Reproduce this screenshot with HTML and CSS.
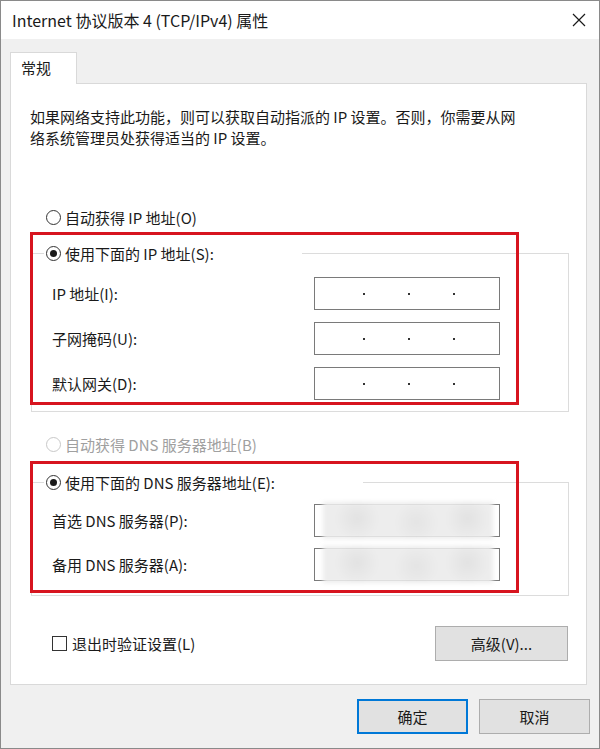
FILE: index.html
```html
<!DOCTYPE html>
<html lang="zh-CN">

<head>
    <meta charset="UTF-8">
    <title>Internet 协议版本 4 (TCP/IPv4) 属性</title>
    <link rel="stylesheet" href="styles.css">
</head>

<body>
    <div class="window">
        <div class="titlebar">
            <span class="title">Internet 协议版本 4 (TCP/IPv4) 属性</span>
            <svg class="close" width="14" height="14" viewBox="0 0 14 14">
                <path d="M1 1 L13 13 M13 1 L1 13" stroke="#1a1a1a" stroke-width="1.2" fill="none" />
            </svg>
        </div>

        <div class="body">
            <div class="tabs">
                <div class="tab">常规</div>
            </div>

            <div class="panel">
                <p class="desc">如果网络支持此功能，则可以获取自动指派的 IP 设置。否则，你需要从网<br>络系统管理员处获得适当的 IP 设置。</p>

                <div class="option first">
                    <span class="radio"></span>
                    <span>自动获得 IP 地址(O)</span>
                </div>

                <fieldset class="group ip-group">
                    <legend class="legend ip-legend">
                        <span class="radio checked"></span>
                        <span>使用下面的 IP 地址(S):</span>
                    </legend>
                    <div class="rows">
                        <div class="row">
                            <span>IP 地址(I):</span>
                            <div class="ip-box"><i></i><i></i><i></i></div>
                        </div>
                        <div class="row">
                            <span>子网掩码(U):</span>
                            <div class="ip-box"><i></i><i></i><i></i></div>
                        </div>
                        <div class="row">
                            <span>默认网关(D):</span>
                            <div class="ip-box"><i></i><i></i><i></i></div>
                        </div>
                    </div>
                </fieldset>

                <div class="option disabled">
                    <span class="radio"></span>
                    <span>自动获得 DNS 服务器地址(B)</span>
                </div>

                <fieldset class="group dns-group">
                    <legend class="legend dns-legend">
                        <span class="radio checked"></span>
                        <span>使用下面的 DNS 服务器地址(E):</span>
                    </legend>
                    <div class="rows">
                        <div class="row">
                            <span>首选 DNS 服务器(P):</span>
                            <div class="ip-box blurred"><b class="smudge"></b></div>
                        </div>
                        <div class="row">
                            <span>备用 DNS 服务器(A):</span>
                            <div class="ip-box blurred"><b class="smudge"></b></div>
                        </div>
                    </div>
                </fieldset>

                <div class="footer-row">
                    <label class="check">
                        <span class="checkbox"></span>
                        <span>退出时验证设置(L)</span>
                    </label>
                    <button class="btn advanced">高级(V)...</button>
                </div>

                <!-- 标注框 -->
                <div class="mark mark-ip"></div>
                <div class="mark mark-dns"></div>
            </div>

            <div class="actions">
                <button class="btn primary">确定</button>
                <button class="btn">取消</button>
            </div>
        </div>
    </div>
</body>

</html>
```

FILE: styles.css
```css
* {
    box-sizing: border-box;
}

html,
body {
    margin: 0;
    padding: 0;
}

body {
    font-family: "Noto Sans CJK SC", "Noto Sans", sans-serif;
    font-size: 15px;
    color: #1a1a1a;
    background: #fff;
}

.window {
    width: 600px;
    height: 749px;
    border: 1px solid #8a8a8a;
    background: #f0f0f0;
    display: flex;
    flex-direction: column;
}

.titlebar {
    height: 38px;
    background: #fff;
    display: flex;
    align-items: center;
    justify-content: space-between;
    padding: 0 13px 0 11px;
}

.title {
    font-size: 16px;
}

.close {
    display: block;
}

.body {
    flex: 1;
    padding: 13px 0 0 9px;
}

.tabs {
    display: flex;
}

.tab {
    position: relative;
    z-index: 1;
    width: 67px;
    height: 32px;
    margin-bottom: -1px;
    padding: 4px 0 0 10px;
    background: #fff;
    border: 1px solid #d9d9d9;
    border-bottom: none;
}

.panel {
    position: relative;
    width: 577px;
    height: 602px;
    background: #fff;
    border: 1px solid #d9d9d9;
    padding: 22px 17px 0 20px;
}

.desc {
    margin: 0 0 0 -1px;
    line-height: 21px;
    height: 36px;
}

.option {
    display: flex;
    align-items: center;
    height: 20px;
    padding-left: 15px;
    gap: 4px;
}

.option.first {
    margin-top: 65px;
}

.option.disabled {
    margin-top: 22px;
    color: #a0a0a0;
}

.radio {
    width: 15px;
    height: 15px;
    border: 1px solid #333;
    border-radius: 50%;
    background: #fff;
    display: flex;
    align-items: center;
    justify-content: center;
    flex: none;
}

.radio.checked::after {
    content: "";
    width: 7px;
    height: 7px;
    border-radius: 50%;
    background: #1a1a1a;
}

.option.disabled .radio {
    border-color: #c8c8c8;
}

.group {
    margin: 0;
    padding: 0;
    border: 1px solid #dcdcdc;
    min-width: 0;
}

.ip-group {
    margin-top: 16px;
}

.dns-group {
    margin-top: 18px;
}

.legend {
    display: flex;
    align-items: center;
    gap: 4px;
    height: 20px;
    margin-left: 12px;
    padding: 0 0 0 2px;
    background: #fff;
}

.ip-legend {
    width: 258px;
}

.dns-legend {
    width: 319px;
}

.rows {
    display: flex;
    flex-direction: column;
    gap: 12px;
    padding: 14px 68px 11px 20px;
}

.dns-group .rows {
    gap: 11px;
    padding-top: 12px;
    padding-bottom: 14px;
}

.row {
    display: flex;
    align-items: center;
    justify-content: space-between;
    height: 33px;
}

.ip-box {
    position: relative;
    width: 186px;
    height: 33px;
    border: 1px solid #7a7a7a;
    background: #fff;
    display: flex;
    align-items: center;
    padding-left: 48px;
    gap: 43px;
}

.ip-box i {
    width: 2px;
    height: 2px;
    background: #333;
}

.smudge {
    position: absolute;
    top: -3px;
    bottom: -3px;
    left: 8px;
    right: 6px;
    background:
        radial-gradient(circle at 20% 45%, #e2e2e2 0, transparent 22px),
        radial-gradient(circle at 55% 55%, #e4e4e4 0, transparent 22px),
        radial-gradient(circle at 85% 45%, #e2e2e2 0, transparent 22px),
        #ededed;
    filter: blur(2px);
}

.footer-row {
    display: flex;
    align-items: center;
    justify-content: space-between;
    margin-top: 30px;
    padding: 0 1px 0 21px;
}

.check {
    display: flex;
    align-items: center;
    gap: 5px;
}

.checkbox {
    width: 15px;
    height: 15px;
    border: 1px solid #333;
    background: #fff;
}

.btn {
    font-family: inherit;
    font-size: 15px;
    color: #1a1a1a;
    background: #e1e1e1;
    border: 1px solid #adadad;
    padding: 0;
}

.advanced {
    width: 133px;
    height: 35px;
}

.actions {
    display: flex;
    justify-content: flex-end;
    gap: 11px;
    margin-top: 14px;
    padding-right: 9px;
}

.actions .btn {
    width: 111px;
    height: 35px;
}

.btn.primary {
    border: 2px solid #0078d7;
}

.mark {
    position: absolute;
    border: 3px solid #d7141f;
    pointer-events: none;
}

.mark-ip {
    left: 19px;
    top: 148px;
    width: 489px;
    height: 173px;
}

.mark-dns {
    left: 19px;
    top: 377px;
    width: 489px;
    height: 132px;
}
```
